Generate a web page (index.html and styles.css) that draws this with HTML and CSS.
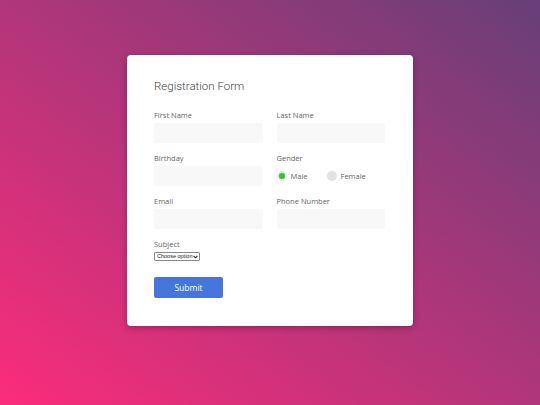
FILE: index.html
```html
<!DOCTYPE html>
<html>
<head>
<meta charset="utf-8">
<link rel="stylesheet" href="styles.css">
</head>
<body>
<div class="page">
  <form class="card">
    <h1 class="title">Registration Form</h1>
    <div class="grid">
      <div class="field">
        <label class="label">First Name</label>
        <input class="input" type="text">
      </div>
      <div class="field">
        <label class="label">Last Name</label>
        <input class="input" type="text">
      </div>
      <div class="field">
        <label class="label">Birthday</label>
        <input class="input" type="text">
      </div>
      <div class="field">
        <label class="label">Gender</label>
        <div class="radios">
          <span class="radio"><span class="dot on"></span>Male</span>
          <span class="radio"><span class="dot"></span>Female</span>
        </div>
      </div>
      <div class="field">
        <label class="label">Email</label>
        <input class="input" type="text">
      </div>
      <div class="field">
        <label class="label">Phone Number</label>
        <input class="input" type="text">
      </div>
    </div>
    <div class="field subject">
      <label class="label">Subject</label>
      <span class="select-wrap">
        <select class="select"><option>Choose option</option></select>
        <svg class="chev" width="5" height="4" viewBox="0 0 5 4"><path d="M0.6 0.8 L2.5 2.8 L4.4 0.8" fill="none" stroke="#222" stroke-width="1.1"/></svg>
      </span>
    </div>
    <button class="submit" type="button">Submit</button>
  </form>
</div>
</body>
</html>
```
FILE: styles.css
```css
html, body {
  margin: 0;
  height: 100%;
}
body {
  background: linear-gradient(to right top, #fb2c7b, #673f78);
  font-family: "Open Sans", "Liberation Sans", sans-serif;
}
.page {
  display: flex;
  justify-content: center;
  padding-top: 55px;
}
.card {
  width: 231px;
  background: #fff;
  border-radius: 4px;
  padding: 22px 28px 28px 27px;
  box-shadow: 0 2px 6px rgba(60, 0, 40, 0.35);
}
.title {
  margin: 0 0 14px;
  font-family: Roboto, "Open Sans", sans-serif;
  font-size: 11.5px;
  line-height: 18px;
  font-weight: 300;
  color: #444;
}
.grid {
  display: grid;
  grid-template-columns: 1fr 1fr;
  column-gap: 14px;
  row-gap: 9px;
}
.field {
  display: flex;
  flex-direction: column;
}
.label {
  font-size: 7.5px;
  line-height: 12px;
  color: #666;
  margin-bottom: 2px;
}
.input {
  height: 20px;
  box-sizing: border-box;
  border: none;
  border-radius: 2px;
  background: #f8f8f8;
  margin: 0;
  padding: 0;
  width: 100%;
}
.radios {
  height: 20px;
  display: flex;
  align-items: center;
  gap: 19px;
  padding-left: 0;
}
.radio {
  display: flex;
  align-items: center;
  gap: 4px;
  font-size: 7.5px;
  color: #666;
}
.dot {
  width: 10px;
  height: 10px;
  border-radius: 50%;
  background: #e2e2e2;
  box-sizing: border-box;
}
.dot.on {
  background: #4caf50;
  border: 2px solid #d8ecd6;
}
.subject {
  margin-top: 9px;
  align-items: flex-start;
}
.select-wrap {
  position: relative;
  display: inline-block;
  height: 9px;
}
.select {
  -webkit-appearance: none;
  appearance: none;
  display: block;
  box-sizing: border-box;
  width: 46px;
  font-family: "Liberation Sans", sans-serif;
  font-size: 5.5px;
  line-height: 7px;
  height: 9px;
  padding: 0 0 0 2px;
  margin: 0;
  border: 1px solid #888;
  border-radius: 1px;
  background: #fff;
  color: #222;
}
.chev {
  position: absolute;
  right: 2px;
  top: 2.5px;
}
.submit {
  display: block;
  margin-top: 16px;
  width: 69px;
  height: 21px;
  border: none;
  border-radius: 2px;
  background: #4676dc;
  color: #fff;
  font-family: "Open Sans", "Liberation Sans", sans-serif;
  font-size: 8.5px;
  padding: 0;
}
```
